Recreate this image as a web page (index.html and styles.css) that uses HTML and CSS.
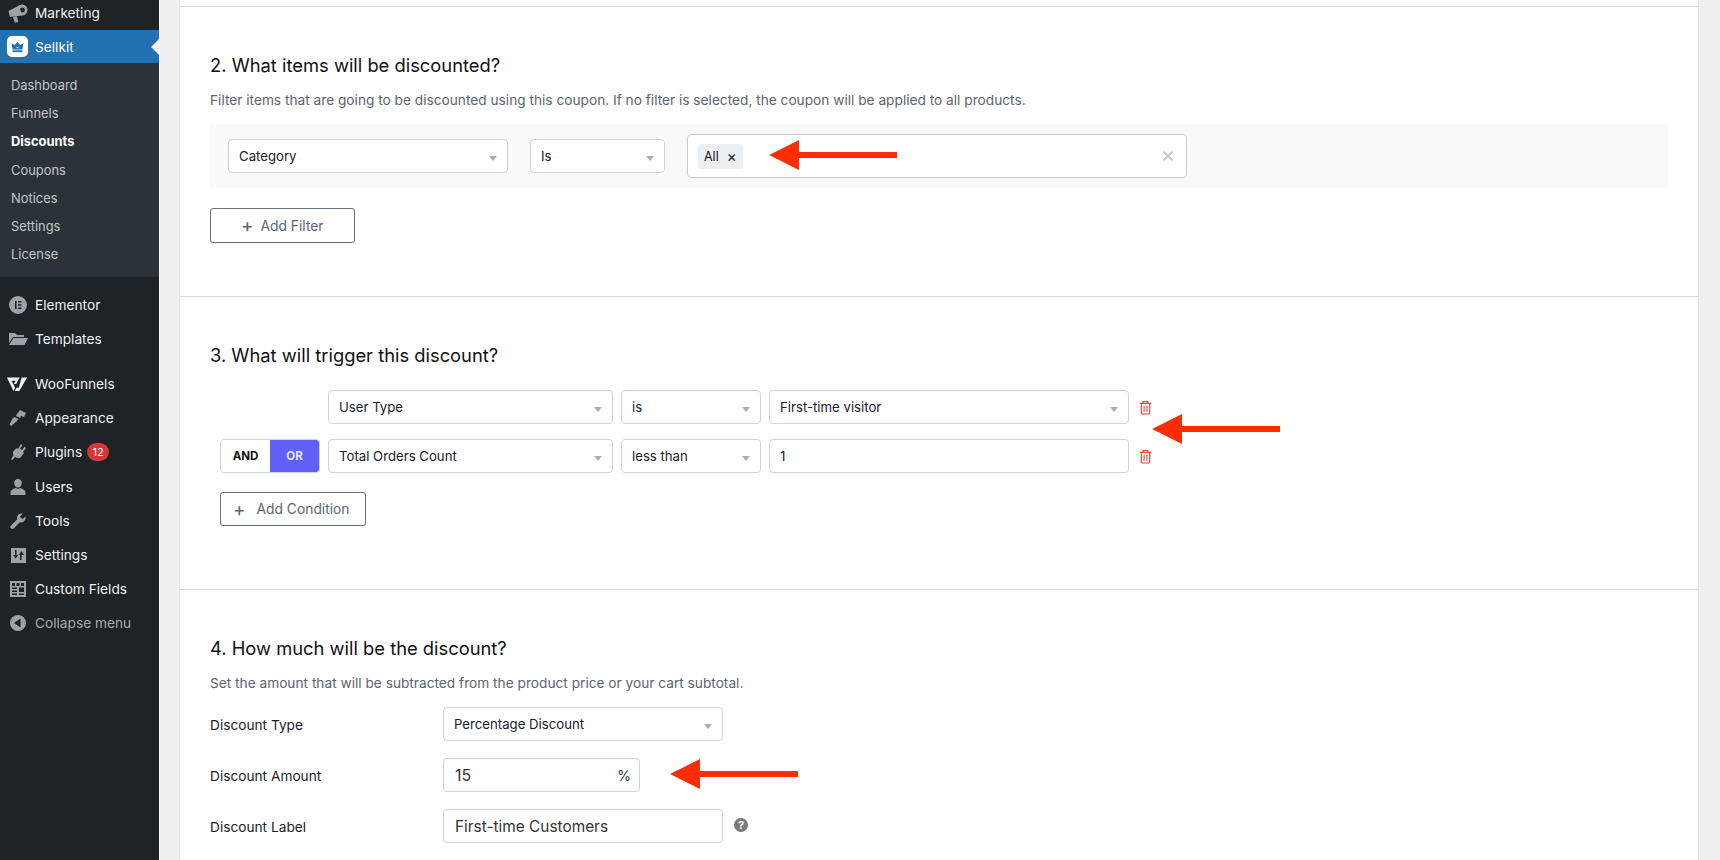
FILE: index.html
```html
<!DOCTYPE html>
<html lang="en">
<head>
<meta charset="utf-8">
<title>Sellkit Discounts</title>
<link rel="stylesheet" href="styles.css">
</head>
<body>
<div class="app">
  <nav class="sidebar">
    <a class="item first"><svg class="ic" viewBox="0 0 20 20"><path d="M.5 8 11 2.500 14 12.500 2 14zM5 14l4-.5 1.300 5.500-3.500.7z"/><path fill-rule="evenodd" d="M14 1.500a5.500 5.500 0 1 1 0 11 5.500 5.500 0 0 1 0-11zM14.500 4.500a2.500 2.500 0 1 0 0 5 2.500 2.500 0 0 0 0-5z"/></svg>Marketing</a>
    <a class="item current"><span class="logo"><svg viewBox="0 0 20 20"><path fill-rule="evenodd" d="M2 5.500 6.500 8 10 3.500 13.500 8 18 5.500 16.500 14h-13zM8.500 10.500a1.500 1.500 0 0 0 3 0z"/><path d="M3.500 15h13v2.500h-13z"/></svg></span>Sellkit<i class="caret"></i></a>
    <div class="submenu">
      <a>Dashboard</a><a>Funnels</a><a class="on">Discounts</a><a>Coupons</a><a>Notices</a><a>Settings</a><a>License</a>
    </div>
    <a class="item el"><svg class="ic" viewBox="0 0 20 20"><path fill-rule="evenodd" d="M10 1a9 9 0 1 0 0 18 9 9 0 0 0 0-18zM7 6h1.500v8H7zm3 0h3.500v1.500H10zm0 3.200h3.500v1.500H10zm0 3.300h3.500V14H10z"/></svg>Elementor</a>
    <a class="item"><svg class="ic" viewBox="0 0 20 20"><path d="M1 4h6l2 2h7v2H5L1 14zM5.500 9H20l-3.500 7H1z"/></svg>Templates</a>
    <a class="item woo"><svg class="ic wf" viewBox="0 0 24 20"><path d="M1 3h14l-4 7h-2.500l2-3.500H6L10 14l-1.800 3.500zM17 3h6l-8.500 14.500h-5l2-3.500H14z"/></svg>WooFunnels</a>
    <a class="item"><svg class="ic" viewBox="0 0 20 20"><path d="M12 2l6 3-2 4-3-1-1 2-4-2 1-2zM6.500 9l4 2-2 2.500L3 18l-1.500-1.500 3-6z"/></svg>Appearance</a>
    <a class="item"><svg class="ic" viewBox="0 0 20 20"><path d="M13 2l1.500 1.200L12 6.500l2 1.500 2.500-3.200L18 6l-3 4 1 1-3.500 4.500c-1.500 1-3.500.8-5.500-.5L4.500 18 3 17l2.500-3.500C5 11.500 4.500 10 6 8.500L9 6l1 1z"/></svg>Plugins<span class="badge">12</span></a>
    <a class="item"><svg class="ic" viewBox="0 0 20 20"><path d="M10 2a3.800 3.800 0 0 1 3.800 4c0 2.500-1.600 4.500-3.800 4.500S6.200 8.500 6.200 6A3.800 3.800 0 0 1 10 2zM2.500 15.500c0-2.500 3-3.500 4.800-4.500 1.600 1 3.800 1 5.400 0 1.800 1 4.800 2 4.800 4.500V18h-15z"/></svg>Users</a>
    <a class="item"><svg class="ic" viewBox="0 0 20 20"><path d="M17.500 5.500l-3 2.500-2.500-2 2.500-3.500c-2.500-.5-5.500 1-5.500 4 0 .8.200 1.300.3 1.800L3 14.500c-2 2.500 1 4.500 3 2.800l5.800-6c3.700.8 6.500-2.500 5.700-5.800z"/></svg>Tools</a>
    <a class="item"><svg class="ic" viewBox="0 0 20 20"><path fill-rule="evenodd" d="M3 3h15v15H3zM7 5v5H5l2.800 3.500L10 10H8.500V5zm5 10h1.500v-5H16l-2.500-4L11 10h1z"/></svg>Settings</a>
    <a class="item"><svg class="ic" viewBox="0 0 20 20"><path fill-rule="evenodd" d="M2 2h16v16H2zM4 4v3h3V4zm4.500 0v3h3V4zM13 4v3h3V4zM4 8.500V10h5V8.500zM4 11.500V13h5v-1.500zM4 14.500V16h5v-1.500zM11 8.500V13h5V8.500zM11 14.500V16h5v-1.500z"/></svg>Custom Fields</a>
    <a class="item collapse"><svg class="ic" viewBox="0 0 20 20"><path fill-rule="evenodd" d="M10 2a8 8 0 1 0 0 16 8 8 0 0 0 0-16zm2.500 3.500v9L6 10z"/></svg>Collapse menu</a>
  </nav>

  <main class="main">
    <div class="panel p1"></div>
    <section class="panel p2">
      <h2>2. What items will be discounted?</h2>
      <p class="desc">Filter items that are going to be discounted using this coupon. If no filter is selected, the coupon will be applied to all products.</p>
      <div class="filter">
        <div class="sel w280">Category</div>
        <div class="sel w135">Is</div>
        <div class="multi">
          <span class="tag">All<b>×</b></span>
          <svg class="arrow a1" viewBox="0 0 128 30"><path d="M0 15 30 0v12h98v6H30v12z"/></svg>
          <svg class="clear" viewBox="0 0 12 12"><path d="M1.500 1.500l9 9m0-9l-9 9"/></svg>
        </div>
      </div>
      <button class="btn addf"><span class="plus">+</span>Add Filter</button>
    </section>

    <section class="panel p3">
      <h2>3. What will trigger this discount?</h2>
      <div class="cond first-cond">
        <div class="sel w285">User Type</div>
        <div class="sel w140">is</div>
        <div class="sel w360">First-time visitor</div>
        <svg class="trash" viewBox="0 0 14 16"><path d="M1 3.500h12M4.500 3.500V1.500h5v2M2.500 3.500v10.500a1 1 0 0 0 1 1h7a1 1 0 0 0 1-1V3.500M5.500 6v6.500M8.500 6v6.500"/></svg>
        <svg class="arrow a2" viewBox="0 0 128 30"><path d="M0 15 30 0v12h98v6H30v12z"/></svg>
      </div>
      <div class="cond">
        <div class="toggle"><span class="and">AND</span><span class="or">OR</span></div>
        <div class="sel w285">Total Orders Count</div>
        <div class="sel w140">less than</div>
        <div class="sel w360 plain">1</div>
        <svg class="trash" viewBox="0 0 14 16"><path d="M1 3.500h12M4.500 3.500V1.500h5v2M2.500 3.500v10.500a1 1 0 0 0 1 1h7a1 1 0 0 0 1-1V3.500M5.500 6v6.500M8.500 6v6.500"/></svg>
      </div>
      <button class="btn addc"><span class="plus">+</span>Add Condition</button>
    </section>

    <section class="panel p4">
      <h2>4. How much will be the discount?</h2>
      <p class="desc">Set the amount that will be subtracted from the product price or your cart subtotal.</p>
      <div class="field"><label>Discount Type</label><div class="sel w280">Percentage Discount</div></div>
      <div class="field amt"><label>Discount Amount</label><div class="sel w197 plain num"><span>15</span><span class="pct">%</span></div>
        <svg class="arrow a3" viewBox="0 0 128 30"><path d="M0 15 30 0v12h98v6H30v12z"/></svg></div>
      <div class="field lab"><label>Discount Label</label><div class="sel w280 plain big">First-time Customers</div><span class="help">?</span></div>
    </section>
  </main>
</div>
</body>
</html>
```
FILE: styles.css
```css
* { box-sizing: border-box; }
html, body { margin: 0; height: 860px; overflow: hidden; }
body { font-family: Inter, "Liberation Sans", sans-serif; background: #f0f0f0; color: #1d2327; }
.app { display: flex; height: 860px; overflow: hidden; }

.sidebar { width: 160px; flex: none; background: #1d2327; color: #f0f0f1; font-size: 13.700px; border-right: 1px solid #fafafa; }
.item { display: flex; align-items: center; height: 34.200px; padding-left: 8px; position: relative; }
.item.first { height: 30px; padding-bottom: 4px; }
.ic { width: 20px; height: 20px; margin-right: 7px; fill: #9ca2a7; flex: none; }
.wf { fill: #f0f0f1; width: 22px; margin-left: -2px; margin-right: 7px; }
.current { background: #2271b1; color: #fff; height: 33px; }
.logo { width: 21px; height: 21px; border-radius: 5px; background: #fff; margin: 0 7px 0 -1px; display: flex; align-items: center; justify-content: center; flex: none; }
.logo svg { width: 15px; height: 15px; fill: #2271b1; }
.caret { position: absolute; right: 0; top: 9px; border: 8px solid transparent; border-right-color: #f0f0f1; border-left: 0; }
.submenu { background: #2c3338; padding: 9px 0 0; height: 214px; }
.submenu a { display: block; height: 28.200px; line-height: 28px; padding-left: 11px; font-size: 12.900px; color: #c3c4c7; }
.submenu a.on { color: #fff; font-weight: 700; }
.el { margin-top: 11px; }
.woo { margin-top: 10.500px; }
.collapse { color: #a7aaad; }
.badge { margin-left: 5px; background: #d63638; color: #fff; font-size: 11px; min-width: 22px; height: 18px; line-height: 18px; text-align: center; border-radius: 9px; }

.main { flex: 1; padding: 0 21px 0 19px; min-width: 0; }
.panel { background: #fff; padding-left: 30px; position: relative; border-bottom: 1px solid #dcdcde; border-left: 1px solid #e4e4e6; border-right: 1px solid #e4e4e6; }
.p1 { height: 7px; }
.p2 { height: 290px; padding-top: 46px; }
.p3 { height: 293px; padding-top: 46px; }
.p4 { height: 300px; padding-top: 46px; border-bottom: 0; }
h2 { margin: 0; font-size: 18.350px; font-weight: 400; line-height: 24px; color: #111; }
.desc { margin: 13px 0 0; font-size: 13.700px; line-height: 20px; color: #5b6570; }

.filter { display: flex; align-items: center; width: 1458px; height: 64px; background: #f9f9f9; margin-top: 14px; padding-left: 18px; gap: 22px; }
.sel { height: 34px; border: 1px solid #cbd5e0; border-radius: 4px; background: #fff; padding: 0 0 1px 10px; font-size: 13.200px; color: #1a202c; display: flex; align-items: center; position: relative; flex: none; }
.sel::after { content: ""; position: absolute; right: 10px; top: 16px; border: 4px solid transparent; border-top: 5px solid #a0aec0; border-bottom: 0; }
.sel.plain::after { display: none; }
.w280 { width: 280px; }
.w135 { width: 135px; }
.w285 { width: 285px; }
.w140 { width: 140px; }
.w360 { width: 360px; }
.w197 { width: 197px; }
.multi { width: 500px; height: 44px; border: 1px solid #ccc; border-radius: 4px; background: #fff; display: flex; align-items: center; padding-left: 10px; position: relative; flex: none; }
.tag { background: #edf0f3; border-radius: 3px; height: 25px; width: 45px; display: flex; align-items: center; font-size: 12.500px; padding-left: 6px; color: #111; }
.tag b { font-weight: 500; margin-left: 8px; font-size: 15px; color: #333; }
.clear { position: absolute; right: 12px; top: 15px; width: 12px; height: 12px; stroke: #c4c4c4; stroke-width: 2; fill: none; }
.arrow { position: absolute; width: 128px; height: 30px; fill: #ff2d00; }
.a1 { left: 81px; top: 5px; }

.btn { display: flex; align-items: center; background: #fff; border: 1px solid #68707a; border-radius: 3px; color: #5c6672; font: 13.800px Inter, "Liberation Sans", sans-serif; padding: 0; }
.plus { font-size: 19px; font-weight: 400; line-height: 1; }
.addf { width: 145px; height: 35px; margin-top: 20px; padding-left: 30px; }
.addf .plus { margin-right: 7px; }
.addc { width: 146px; height: 34px; margin: 19px 0 0 10px; padding-left: 12px; }
.addc .plus { margin-right: 11px; }

.cond { display: flex; align-items: center; gap: 8px; height: 34px; margin-top: 15px; margin-left: 118px; position: relative; width: 900px; }
.first-cond { margin-top: 23px; }
.toggle { position: absolute; left: -108px; top: 0; display: flex; width: 100px; height: 34px; border: 1px solid #cbd5e0; border-radius: 4px; overflow: hidden; font-size: 11.500px; font-weight: 700; }
.toggle span { display: flex; align-items: center; justify-content: center; }
.and { width: 49px; background: #fff; color: #111; }
.or { flex: 1; background: #6160f6; color: #e8e8ff; }
.trash { width: 13px; height: 15px; margin-left: 2px; stroke: #f0393b; fill: none; stroke-width: 1.200; flex: none; }
.a2 { left: 824px; top: 24px; }

.field { display: flex; align-items: center; height: 34px; position: relative; margin-top: 17px; }
.p4 .desc + .field { margin-top: 14px; }
.field label { width: 233px; font-size: 13.700px; color: #1a202c; flex: none; padding-top: 2px; }
.num { justify-content: space-between; padding: 0 8px 0 11px; font-size: 16px; color: #333; }
.pct { font-size: 14px; }
.a3 { left: 460px; top: 1px; }
.big { font-size: 15.400px; color: #333; padding: 0 0 0 11px; }
.help { width: 14px; height: 14px; margin-left: 11px; border-radius: 50%; background: #7a7a7a; color: #fff; font-size: 11px; font-weight: 700; line-height: 14px; text-align: center; margin-top: -3px; }
```
